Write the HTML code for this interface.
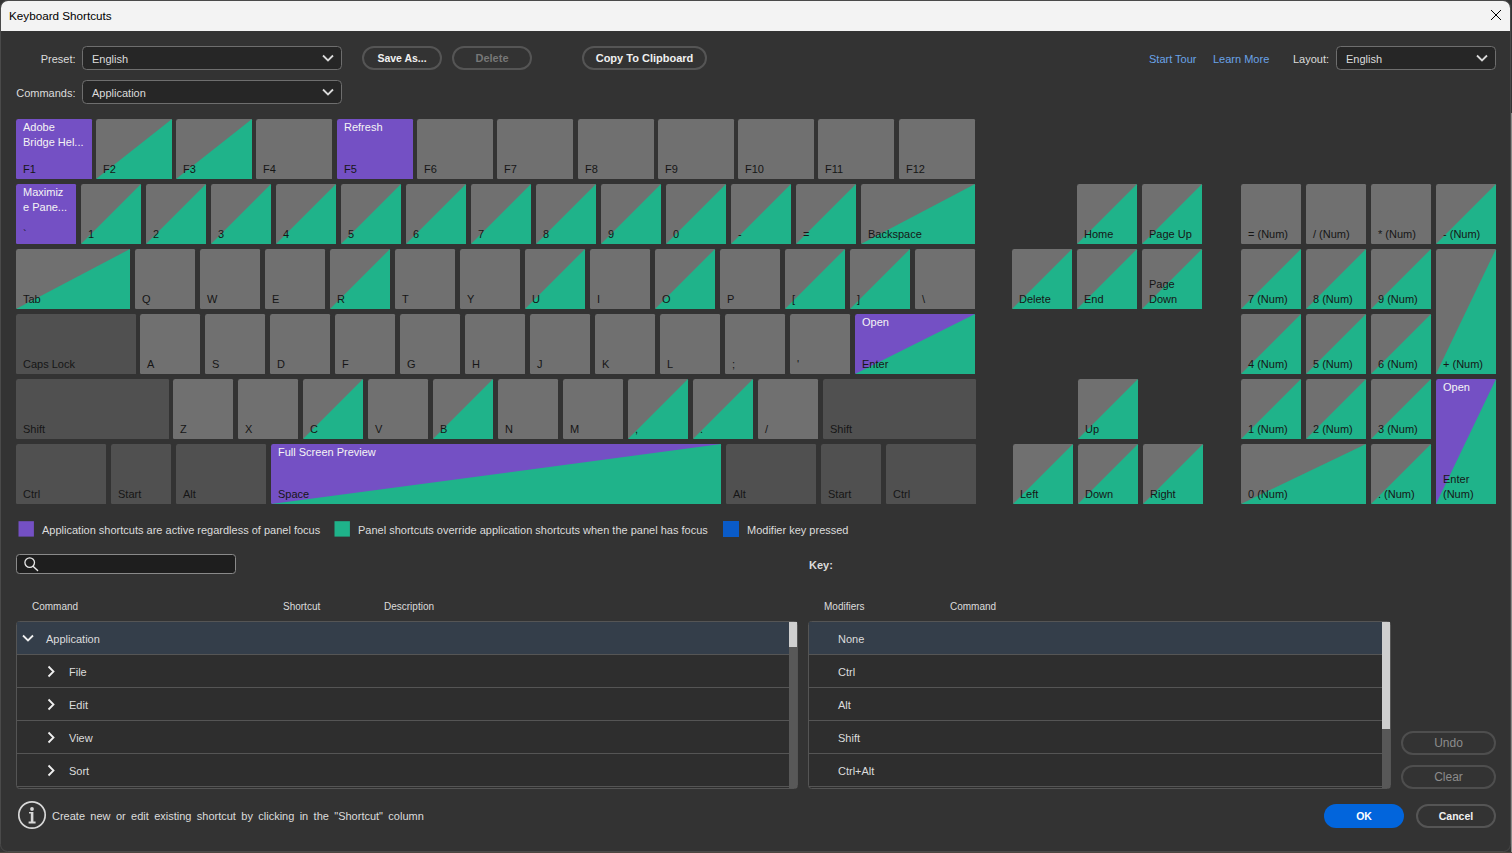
<!DOCTYPE html>
<html><head><meta charset="utf-8"><title>Keyboard Shortcuts</title>
<style>html,body{margin:0;padding:0;width:1512px;height:853px;overflow:hidden;background:#343434;}
text{white-space:pre;}</style></head><body>
<svg width="1512" height="853" viewBox="0 0 1512 853" font-family='"Liberation Sans", sans-serif' style="position:absolute;left:0;top:0">
<rect x="0" y="0" width="1512" height="853" fill="#343434"/>
<rect x="0" y="852" width="1512" height="1" fill="#4d4640"/>
<rect x="1511" y="113" width="1" height="739" fill="#8a8a88"/>
<rect x="0.5" y="0.5" width="1510" height="851" rx="7" fill="#333333" stroke="#4a4a4a" stroke-width="1"/>
<path d="M1,31 V8 a7,7 0 0 1 7,-7 H1503 a7,7 0 0 1 7,7 V31 Z" fill="#f3f3f3"/>
<text x="9" y="20" font-size="11.7" fill="#000">Keyboard Shortcuts</text>
<path d="M1491,10 L1501,20 M1501,10 L1491,20" stroke="#000" stroke-width="1"/>
<text x="75.5" y="63" font-size="11" fill="#dcdcdc" text-anchor="end">Preset:</text>
<rect x="82.5" y="46.5" width="259" height="23" rx="4" fill="#262626" stroke="#6e6e6e" stroke-width="1"/>
<text x="92" y="63" font-size="11" fill="#dcdcdc">English</text>
<path d="M323,55.5 L328,60.5 L333,55.5" fill="none" stroke="#dadada" stroke-width="1.8"/>
<text x="75.5" y="97" font-size="11" fill="#dcdcdc" text-anchor="end">Commands:</text>
<rect x="82.5" y="80.5" width="259" height="23" rx="4" fill="#262626" stroke="#6e6e6e" stroke-width="1"/>
<text x="92" y="97" font-size="11" fill="#dcdcdc">Application</text>
<path d="M323,89.5 L328,94.5 L333,89.5" fill="none" stroke="#dadada" stroke-width="1.8"/>
<rect x="363" y="47" width="78" height="22" rx="11.0" fill="none" stroke="#555" stroke-width="2"/>
<text x="402.0" y="62.0" font-size="10.5" fill="#f0f0f0" font-weight="bold" text-anchor="middle">Save As...</text>
<rect x="453" y="47" width="78" height="22" rx="11.0" fill="none" stroke="#555" stroke-width="2"/>
<text x="492.0" y="62.0" font-size="11" fill="#777" font-weight="bold" text-anchor="middle">Delete</text>
<rect x="583" y="47" width="123" height="22" rx="11.0" fill="none" stroke="#555" stroke-width="2"/>
<text x="644.5" y="62.0" font-size="11" fill="#f0f0f0" font-weight="bold" text-anchor="middle">Copy To Clipboard</text>
<text x="1149" y="63" font-size="11" fill="#6aa3e8">Start Tour</text>
<text x="1213" y="63" font-size="11" fill="#6aa3e8">Learn More</text>
<text x="1293" y="63" font-size="11" fill="#dcdcdc">Layout:</text>
<rect x="1336.5" y="46.5" width="159" height="23" rx="4" fill="#262626" stroke="#6e6e6e" stroke-width="1"/>
<text x="1346" y="63" font-size="11" fill="#dcdcdc">English</text>
<path d="M1477,55.5 L1482,60.5 L1487,55.5" fill="none" stroke="#dadada" stroke-width="1.8"/>
<path d="M16,121.4 Q16,119 18.4,119 H90.8 Q92,119 92,120.2 V179 H17.2 Q16,179 16,177.8 Z" fill="#7450c4"/>
<text x="23" y="131" font-size="11" fill="#f4f4f4">Adobe</text>
<text x="23" y="146" font-size="11" fill="#f4f4f4">Bridge Hel...</text>
<text x="23" y="173" font-size="11" fill="#161616">F1</text>
<path d="M96,121.4 Q96,119 98.4,119 H170.8 Q172,119 172,120.2 V179 H97.2 Q96,179 96,177.8 Z" fill="#707070"/>
<polygon points="96,179 172,119 172,179" fill="#1fb38a"/>
<text x="103" y="173" font-size="11" fill="#161616">F2</text>
<path d="M176,121.4 Q176,119 178.4,119 H250.8 Q252,119 252,120.2 V179 H177.2 Q176,179 176,177.8 Z" fill="#707070"/>
<polygon points="176,179 252,119 252,179" fill="#1fb38a"/>
<text x="183" y="173" font-size="11" fill="#161616">F3</text>
<path d="M256,121.4 Q256,119 258.4,119 H330.8 Q332,119 332,120.2 V179 H257.2 Q256,179 256,177.8 Z" fill="#707070"/>
<text x="263" y="173" font-size="11" fill="#161616">F4</text>
<path d="M337,121.4 Q337,119 339.4,119 H411.8 Q413,119 413,120.2 V179 H338.2 Q337,179 337,177.8 Z" fill="#7450c4"/>
<text x="344" y="131" font-size="11" fill="#f4f4f4">Refresh</text>
<text x="344" y="173" font-size="11" fill="#161616">F5</text>
<path d="M417,121.4 Q417,119 419.4,119 H491.8 Q493,119 493,120.2 V179 H418.2 Q417,179 417,177.8 Z" fill="#707070"/>
<text x="424" y="173" font-size="11" fill="#161616">F6</text>
<path d="M497,121.4 Q497,119 499.4,119 H571.8 Q573,119 573,120.2 V179 H498.2 Q497,179 497,177.8 Z" fill="#707070"/>
<text x="504" y="173" font-size="11" fill="#161616">F7</text>
<path d="M578,121.4 Q578,119 580.4,119 H652.8 Q654,119 654,120.2 V179 H579.2 Q578,179 578,177.8 Z" fill="#707070"/>
<text x="585" y="173" font-size="11" fill="#161616">F8</text>
<path d="M658,121.4 Q658,119 660.4,119 H732.8 Q734,119 734,120.2 V179 H659.2 Q658,179 658,177.8 Z" fill="#707070"/>
<text x="665" y="173" font-size="11" fill="#161616">F9</text>
<path d="M738,121.4 Q738,119 740.4,119 H812.8 Q814,119 814,120.2 V179 H739.2 Q738,179 738,177.8 Z" fill="#707070"/>
<text x="745" y="173" font-size="11" fill="#161616">F10</text>
<path d="M818,121.4 Q818,119 820.4,119 H892.8 Q894,119 894,120.2 V179 H819.2 Q818,179 818,177.8 Z" fill="#707070"/>
<text x="825" y="173" font-size="11" fill="#161616">F11</text>
<path d="M899,121.4 Q899,119 901.4,119 H973.8 Q975,119 975,120.2 V179 H900.2 Q899,179 899,177.8 Z" fill="#707070"/>
<text x="906" y="173" font-size="11" fill="#161616">F12</text>
<path d="M16,186.4 Q16,184 18.4,184 H74.8 Q76,184 76,185.2 V244 H17.2 Q16,244 16,242.8 Z" fill="#7450c4"/>
<text x="23" y="196" font-size="11" fill="#f4f4f4">Maximiz</text>
<text x="23" y="211" font-size="11" fill="#f4f4f4">e Pane...</text>
<text x="23" y="238" font-size="11" fill="#161616">`</text>
<path d="M81,186.4 Q81,184 83.4,184 H139.8 Q141,184 141,185.2 V244 H82.2 Q81,244 81,242.8 Z" fill="#707070"/>
<polygon points="81,244 141,184 141,244" fill="#1fb38a"/>
<text x="88" y="238" font-size="11" fill="#161616">1</text>
<path d="M146,186.4 Q146,184 148.4,184 H204.8 Q206,184 206,185.2 V244 H147.2 Q146,244 146,242.8 Z" fill="#707070"/>
<polygon points="146,244 206,184 206,244" fill="#1fb38a"/>
<text x="153" y="238" font-size="11" fill="#161616">2</text>
<path d="M211,186.4 Q211,184 213.4,184 H269.8 Q271,184 271,185.2 V244 H212.2 Q211,244 211,242.8 Z" fill="#707070"/>
<polygon points="211,244 271,184 271,244" fill="#1fb38a"/>
<text x="218" y="238" font-size="11" fill="#161616">3</text>
<path d="M276,186.4 Q276,184 278.4,184 H334.8 Q336,184 336,185.2 V244 H277.2 Q276,244 276,242.8 Z" fill="#707070"/>
<polygon points="276,244 336,184 336,244" fill="#1fb38a"/>
<text x="283" y="238" font-size="11" fill="#161616">4</text>
<path d="M341,186.4 Q341,184 343.4,184 H399.8 Q401,184 401,185.2 V244 H342.2 Q341,244 341,242.8 Z" fill="#707070"/>
<polygon points="341,244 401,184 401,244" fill="#1fb38a"/>
<text x="348" y="238" font-size="11" fill="#161616">5</text>
<path d="M406,186.4 Q406,184 408.4,184 H464.8 Q466,184 466,185.2 V244 H407.2 Q406,244 406,242.8 Z" fill="#707070"/>
<polygon points="406,244 466,184 466,244" fill="#1fb38a"/>
<text x="413" y="238" font-size="11" fill="#161616">6</text>
<path d="M471,186.4 Q471,184 473.4,184 H529.8 Q531,184 531,185.2 V244 H472.2 Q471,244 471,242.8 Z" fill="#707070"/>
<polygon points="471,244 531,184 531,244" fill="#1fb38a"/>
<text x="478" y="238" font-size="11" fill="#161616">7</text>
<path d="M536,186.4 Q536,184 538.4,184 H594.8 Q596,184 596,185.2 V244 H537.2 Q536,244 536,242.8 Z" fill="#707070"/>
<polygon points="536,244 596,184 596,244" fill="#1fb38a"/>
<text x="543" y="238" font-size="11" fill="#161616">8</text>
<path d="M601,186.4 Q601,184 603.4,184 H659.8 Q661,184 661,185.2 V244 H602.2 Q601,244 601,242.8 Z" fill="#707070"/>
<polygon points="601,244 661,184 661,244" fill="#1fb38a"/>
<text x="608" y="238" font-size="11" fill="#161616">9</text>
<path d="M666,186.4 Q666,184 668.4,184 H724.8 Q726,184 726,185.2 V244 H667.2 Q666,244 666,242.8 Z" fill="#707070"/>
<polygon points="666,244 726,184 726,244" fill="#1fb38a"/>
<text x="673" y="238" font-size="11" fill="#161616">0</text>
<path d="M731,186.4 Q731,184 733.4,184 H789.8 Q791,184 791,185.2 V244 H732.2 Q731,244 731,242.8 Z" fill="#707070"/>
<polygon points="731,244 791,184 791,244" fill="#1fb38a"/>
<text x="738" y="238" font-size="11" fill="#161616">-</text>
<path d="M796,186.4 Q796,184 798.4,184 H854.8 Q856,184 856,185.2 V244 H797.2 Q796,244 796,242.8 Z" fill="#707070"/>
<polygon points="796,244 856,184 856,244" fill="#1fb38a"/>
<text x="803" y="238" font-size="11" fill="#161616">=</text>
<path d="M861,186.4 Q861,184 863.4,184 H973.8 Q975,184 975,185.2 V244 H862.2 Q861,244 861,242.8 Z" fill="#707070"/>
<polygon points="861,244 975,184 975,244" fill="#1fb38a"/>
<text x="868" y="238" font-size="11" fill="#161616">Backspace</text>
<path d="M16,251.4 Q16,249 18.4,249 H128.8 Q130,249 130,250.2 V309 H17.2 Q16,309 16,307.8 Z" fill="#707070"/>
<polygon points="16,309 130,249 130,309" fill="#1fb38a"/>
<text x="23" y="303" font-size="11" fill="#161616">Tab</text>
<path d="M135,251.4 Q135,249 137.4,249 H193.8 Q195,249 195,250.2 V309 H136.2 Q135,309 135,307.8 Z" fill="#707070"/>
<text x="142" y="303" font-size="11" fill="#161616">Q</text>
<path d="M200,251.4 Q200,249 202.4,249 H258.8 Q260,249 260,250.2 V309 H201.2 Q200,309 200,307.8 Z" fill="#707070"/>
<text x="207" y="303" font-size="11" fill="#161616">W</text>
<path d="M265,251.4 Q265,249 267.4,249 H323.8 Q325,249 325,250.2 V309 H266.2 Q265,309 265,307.8 Z" fill="#707070"/>
<text x="272" y="303" font-size="11" fill="#161616">E</text>
<path d="M330,251.4 Q330,249 332.4,249 H388.8 Q390,249 390,250.2 V309 H331.2 Q330,309 330,307.8 Z" fill="#707070"/>
<polygon points="330,309 390,249 390,309" fill="#1fb38a"/>
<text x="337" y="303" font-size="11" fill="#161616">R</text>
<path d="M395,251.4 Q395,249 397.4,249 H453.8 Q455,249 455,250.2 V309 H396.2 Q395,309 395,307.8 Z" fill="#707070"/>
<text x="402" y="303" font-size="11" fill="#161616">T</text>
<path d="M460,251.4 Q460,249 462.4,249 H518.8 Q520,249 520,250.2 V309 H461.2 Q460,309 460,307.8 Z" fill="#707070"/>
<text x="467" y="303" font-size="11" fill="#161616">Y</text>
<path d="M525,251.4 Q525,249 527.4,249 H583.8 Q585,249 585,250.2 V309 H526.2 Q525,309 525,307.8 Z" fill="#707070"/>
<polygon points="525,309 585,249 585,309" fill="#1fb38a"/>
<text x="532" y="303" font-size="11" fill="#161616">U</text>
<path d="M590,251.4 Q590,249 592.4,249 H648.8 Q650,249 650,250.2 V309 H591.2 Q590,309 590,307.8 Z" fill="#707070"/>
<text x="597" y="303" font-size="11" fill="#161616">I</text>
<path d="M655,251.4 Q655,249 657.4,249 H713.8 Q715,249 715,250.2 V309 H656.2 Q655,309 655,307.8 Z" fill="#707070"/>
<polygon points="655,309 715,249 715,309" fill="#1fb38a"/>
<text x="662" y="303" font-size="11" fill="#161616">O</text>
<path d="M720,251.4 Q720,249 722.4,249 H778.8 Q780,249 780,250.2 V309 H721.2 Q720,309 720,307.8 Z" fill="#707070"/>
<text x="727" y="303" font-size="11" fill="#161616">P</text>
<path d="M785,251.4 Q785,249 787.4,249 H843.8 Q845,249 845,250.2 V309 H786.2 Q785,309 785,307.8 Z" fill="#707070"/>
<polygon points="785,309 845,249 845,309" fill="#1fb38a"/>
<text x="792" y="303" font-size="11" fill="#161616">[</text>
<path d="M850,251.4 Q850,249 852.4,249 H908.8 Q910,249 910,250.2 V309 H851.2 Q850,309 850,307.8 Z" fill="#707070"/>
<polygon points="850,309 910,249 910,309" fill="#1fb38a"/>
<text x="857" y="303" font-size="11" fill="#161616">]</text>
<path d="M915,251.4 Q915,249 917.4,249 H973.8 Q975,249 975,250.2 V309 H916.2 Q915,309 915,307.8 Z" fill="#707070"/>
<text x="922" y="303" font-size="11" fill="#161616">\</text>
<path d="M16,316.4 Q16,314 18.4,314 H134.8 Q136,314 136,315.2 V374 H17.2 Q16,374 16,372.8 Z" fill="#505050"/>
<text x="23" y="368" font-size="11" fill="#161616">Caps Lock</text>
<path d="M140,316.4 Q140,314 142.4,314 H198.8 Q200,314 200,315.2 V374 H141.2 Q140,374 140,372.8 Z" fill="#707070"/>
<text x="147" y="368" font-size="11" fill="#161616">A</text>
<path d="M205,316.4 Q205,314 207.4,314 H263.8 Q265,314 265,315.2 V374 H206.2 Q205,374 205,372.8 Z" fill="#707070"/>
<text x="212" y="368" font-size="11" fill="#161616">S</text>
<path d="M270,316.4 Q270,314 272.4,314 H328.8 Q330,314 330,315.2 V374 H271.2 Q270,374 270,372.8 Z" fill="#707070"/>
<text x="277" y="368" font-size="11" fill="#161616">D</text>
<path d="M335,316.4 Q335,314 337.4,314 H393.8 Q395,314 395,315.2 V374 H336.2 Q335,374 335,372.8 Z" fill="#707070"/>
<text x="342" y="368" font-size="11" fill="#161616">F</text>
<path d="M400,316.4 Q400,314 402.4,314 H458.8 Q460,314 460,315.2 V374 H401.2 Q400,374 400,372.8 Z" fill="#707070"/>
<text x="407" y="368" font-size="11" fill="#161616">G</text>
<path d="M465,316.4 Q465,314 467.4,314 H523.8 Q525,314 525,315.2 V374 H466.2 Q465,374 465,372.8 Z" fill="#707070"/>
<text x="472" y="368" font-size="11" fill="#161616">H</text>
<path d="M530,316.4 Q530,314 532.4,314 H588.8 Q590,314 590,315.2 V374 H531.2 Q530,374 530,372.8 Z" fill="#707070"/>
<text x="537" y="368" font-size="11" fill="#161616">J</text>
<path d="M595,316.4 Q595,314 597.4,314 H653.8 Q655,314 655,315.2 V374 H596.2 Q595,374 595,372.8 Z" fill="#707070"/>
<text x="602" y="368" font-size="11" fill="#161616">K</text>
<path d="M660,316.4 Q660,314 662.4,314 H718.8 Q720,314 720,315.2 V374 H661.2 Q660,374 660,372.8 Z" fill="#707070"/>
<text x="667" y="368" font-size="11" fill="#161616">L</text>
<path d="M725,316.4 Q725,314 727.4,314 H783.8 Q785,314 785,315.2 V374 H726.2 Q725,374 725,372.8 Z" fill="#707070"/>
<text x="732" y="368" font-size="11" fill="#161616">;</text>
<path d="M790,316.4 Q790,314 792.4,314 H848.8 Q850,314 850,315.2 V374 H791.2 Q790,374 790,372.8 Z" fill="#707070"/>
<text x="797" y="368" font-size="11" fill="#161616">'</text>
<path d="M855,316.4 Q855,314 857.4,314 H973.8 Q975,314 975,315.2 V374 H856.2 Q855,374 855,372.8 Z" fill="#7450c4"/>
<polygon points="855,374 975,314 975,374" fill="#1fb38a"/>
<text x="862" y="326" font-size="11" fill="#f4f4f4">Open</text>
<text x="862" y="368" font-size="11" fill="#161616">Enter</text>
<path d="M16,381.4 Q16,379 18.4,379 H167.8 Q169,379 169,380.2 V439 H17.2 Q16,439 16,437.8 Z" fill="#505050"/>
<text x="23" y="433" font-size="11" fill="#161616">Shift</text>
<path d="M173,381.4 Q173,379 175.4,379 H231.8 Q233,379 233,380.2 V439 H174.2 Q173,439 173,437.8 Z" fill="#707070"/>
<text x="180" y="433" font-size="11" fill="#161616">Z</text>
<path d="M238,381.4 Q238,379 240.4,379 H296.8 Q298,379 298,380.2 V439 H239.2 Q238,439 238,437.8 Z" fill="#707070"/>
<text x="245" y="433" font-size="11" fill="#161616">X</text>
<path d="M303,381.4 Q303,379 305.4,379 H361.8 Q363,379 363,380.2 V439 H304.2 Q303,439 303,437.8 Z" fill="#707070"/>
<polygon points="303,439 363,379 363,439" fill="#1fb38a"/>
<text x="310" y="433" font-size="11" fill="#161616">C</text>
<path d="M368,381.4 Q368,379 370.4,379 H426.8 Q428,379 428,380.2 V439 H369.2 Q368,439 368,437.8 Z" fill="#707070"/>
<text x="375" y="433" font-size="11" fill="#161616">V</text>
<path d="M433,381.4 Q433,379 435.4,379 H491.8 Q493,379 493,380.2 V439 H434.2 Q433,439 433,437.8 Z" fill="#707070"/>
<polygon points="433,439 493,379 493,439" fill="#1fb38a"/>
<text x="440" y="433" font-size="11" fill="#161616">B</text>
<path d="M498,381.4 Q498,379 500.4,379 H556.8 Q558,379 558,380.2 V439 H499.2 Q498,439 498,437.8 Z" fill="#707070"/>
<text x="505" y="433" font-size="11" fill="#161616">N</text>
<path d="M563,381.4 Q563,379 565.4,379 H621.8 Q623,379 623,380.2 V439 H564.2 Q563,439 563,437.8 Z" fill="#707070"/>
<text x="570" y="433" font-size="11" fill="#161616">M</text>
<path d="M628,381.4 Q628,379 630.4,379 H686.8 Q688,379 688,380.2 V439 H629.2 Q628,439 628,437.8 Z" fill="#707070"/>
<polygon points="628,439 688,379 688,439" fill="#1fb38a"/>
<text x="635" y="433" font-size="11" fill="#161616">,</text>
<path d="M693,381.4 Q693,379 695.4,379 H751.8 Q753,379 753,380.2 V439 H694.2 Q693,439 693,437.8 Z" fill="#707070"/>
<polygon points="693,439 753,379 753,439" fill="#1fb38a"/>
<text x="700" y="433" font-size="11" fill="#161616">.</text>
<path d="M758,381.4 Q758,379 760.4,379 H816.8 Q818,379 818,380.2 V439 H759.2 Q758,439 758,437.8 Z" fill="#707070"/>
<text x="765" y="433" font-size="11" fill="#161616">/</text>
<path d="M823,381.4 Q823,379 825.4,379 H974.8 Q976,379 976,380.2 V439 H824.2 Q823,439 823,437.8 Z" fill="#505050"/>
<text x="830" y="433" font-size="11" fill="#161616">Shift</text>
<path d="M16,446.4 Q16,444 18.4,444 H104.8 Q106,444 106,445.2 V504 H17.2 Q16,504 16,502.8 Z" fill="#505050"/>
<text x="23" y="498" font-size="11" fill="#161616">Ctrl</text>
<path d="M111,446.4 Q111,444 113.4,444 H169.8 Q171,444 171,445.2 V504 H112.2 Q111,504 111,502.8 Z" fill="#505050"/>
<text x="118" y="498" font-size="11" fill="#161616">Start</text>
<path d="M176,446.4 Q176,444 178.4,444 H264.8 Q266,444 266,445.2 V504 H177.2 Q176,504 176,502.8 Z" fill="#505050"/>
<text x="183" y="498" font-size="11" fill="#161616">Alt</text>
<path d="M271,446.4 Q271,444 273.4,444 H719.8 Q721,444 721,445.2 V504 H272.2 Q271,504 271,502.8 Z" fill="#7450c4"/>
<polygon points="271,504 721,444 721,504" fill="#1fb38a"/>
<text x="278" y="456" font-size="11" fill="#f4f4f4">Full Screen Preview</text>
<text x="278" y="498" font-size="11" fill="#161616">Space</text>
<path d="M726,446.4 Q726,444 728.4,444 H814.8 Q816,444 816,445.2 V504 H727.2 Q726,504 726,502.8 Z" fill="#505050"/>
<text x="733" y="498" font-size="11" fill="#161616">Alt</text>
<path d="M821,446.4 Q821,444 823.4,444 H879.8 Q881,444 881,445.2 V504 H822.2 Q821,504 821,502.8 Z" fill="#505050"/>
<text x="828" y="498" font-size="11" fill="#161616">Start</text>
<path d="M886,446.4 Q886,444 888.4,444 H974.8 Q976,444 976,445.2 V504 H887.2 Q886,504 886,502.8 Z" fill="#505050"/>
<text x="893" y="498" font-size="11" fill="#161616">Ctrl</text>
<path d="M1077,186.4 Q1077,184 1079.4,184 H1135.8 Q1137,184 1137,185.2 V244 H1078.2 Q1077,244 1077,242.8 Z" fill="#707070"/>
<polygon points="1077,244 1137,184 1137,244" fill="#1fb38a"/>
<text x="1084" y="238" font-size="11" fill="#161616">Home</text>
<path d="M1142,186.4 Q1142,184 1144.4,184 H1200.8 Q1202,184 1202,185.2 V244 H1143.2 Q1142,244 1142,242.8 Z" fill="#707070"/>
<polygon points="1142,244 1202,184 1202,244" fill="#1fb38a"/>
<text x="1149" y="238" font-size="11" fill="#161616">Page Up</text>
<path d="M1012,251.4 Q1012,249 1014.4,249 H1070.8 Q1072,249 1072,250.2 V309 H1013.2 Q1012,309 1012,307.8 Z" fill="#707070"/>
<polygon points="1012,309 1072,249 1072,309" fill="#1fb38a"/>
<text x="1019" y="303" font-size="11" fill="#161616">Delete</text>
<path d="M1077,251.4 Q1077,249 1079.4,249 H1135.8 Q1137,249 1137,250.2 V309 H1078.2 Q1077,309 1077,307.8 Z" fill="#707070"/>
<polygon points="1077,309 1137,249 1137,309" fill="#1fb38a"/>
<text x="1084" y="303" font-size="11" fill="#161616">End</text>
<path d="M1142,251.4 Q1142,249 1144.4,249 H1200.8 Q1202,249 1202,250.2 V309 H1143.2 Q1142,309 1142,307.8 Z" fill="#707070"/>
<polygon points="1142,309 1202,249 1202,309" fill="#1fb38a"/>
<text x="1149" y="288" font-size="11" fill="#161616">Page</text>
<text x="1149" y="303" font-size="11" fill="#161616">Down</text>
<path d="M1078,381.4 Q1078,379 1080.4,379 H1136.8 Q1138,379 1138,380.2 V439 H1079.2 Q1078,439 1078,437.8 Z" fill="#707070"/>
<polygon points="1078,439 1138,379 1138,439" fill="#1fb38a"/>
<text x="1085" y="433" font-size="11" fill="#161616">Up</text>
<path d="M1013,446.4 Q1013,444 1015.4,444 H1071.8 Q1073,444 1073,445.2 V504 H1014.2 Q1013,504 1013,502.8 Z" fill="#707070"/>
<polygon points="1013,504 1073,444 1073,504" fill="#1fb38a"/>
<text x="1020" y="498" font-size="11" fill="#161616">Left</text>
<path d="M1078,446.4 Q1078,444 1080.4,444 H1136.8 Q1138,444 1138,445.2 V504 H1079.2 Q1078,504 1078,502.8 Z" fill="#707070"/>
<polygon points="1078,504 1138,444 1138,504" fill="#1fb38a"/>
<text x="1085" y="498" font-size="11" fill="#161616">Down</text>
<path d="M1143,446.4 Q1143,444 1145.4,444 H1201.8 Q1203,444 1203,445.2 V504 H1144.2 Q1143,504 1143,502.8 Z" fill="#707070"/>
<polygon points="1143,504 1203,444 1203,504" fill="#1fb38a"/>
<text x="1150" y="498" font-size="11" fill="#161616">Right</text>
<path d="M1241,186.4 Q1241,184 1243.4,184 H1299.8 Q1301,184 1301,185.2 V244 H1242.2 Q1241,244 1241,242.8 Z" fill="#707070"/>
<text x="1248" y="238" font-size="11" fill="#161616">= (Num)</text>
<path d="M1306,186.4 Q1306,184 1308.4,184 H1364.8 Q1366,184 1366,185.2 V244 H1307.2 Q1306,244 1306,242.8 Z" fill="#707070"/>
<text x="1313" y="238" font-size="11" fill="#161616">/ (Num)</text>
<path d="M1371,186.4 Q1371,184 1373.4,184 H1429.8 Q1431,184 1431,185.2 V244 H1372.2 Q1371,244 1371,242.8 Z" fill="#707070"/>
<text x="1378" y="238" font-size="11" fill="#161616">* (Num)</text>
<path d="M1436,186.4 Q1436,184 1438.4,184 H1494.8 Q1496,184 1496,185.2 V244 H1437.2 Q1436,244 1436,242.8 Z" fill="#707070"/>
<polygon points="1436,244 1496,184 1496,244" fill="#1fb38a"/>
<text x="1443" y="238" font-size="11" fill="#161616">- (Num)</text>
<path d="M1241,251.4 Q1241,249 1243.4,249 H1299.8 Q1301,249 1301,250.2 V309 H1242.2 Q1241,309 1241,307.8 Z" fill="#707070"/>
<polygon points="1241,309 1301,249 1301,309" fill="#1fb38a"/>
<text x="1248" y="303" font-size="11" fill="#161616">7 (Num)</text>
<path d="M1306,251.4 Q1306,249 1308.4,249 H1364.8 Q1366,249 1366,250.2 V309 H1307.2 Q1306,309 1306,307.8 Z" fill="#707070"/>
<polygon points="1306,309 1366,249 1366,309" fill="#1fb38a"/>
<text x="1313" y="303" font-size="11" fill="#161616">8 (Num)</text>
<path d="M1371,251.4 Q1371,249 1373.4,249 H1429.8 Q1431,249 1431,250.2 V309 H1372.2 Q1371,309 1371,307.8 Z" fill="#707070"/>
<polygon points="1371,309 1431,249 1431,309" fill="#1fb38a"/>
<text x="1378" y="303" font-size="11" fill="#161616">9 (Num)</text>
<path d="M1436,251.4 Q1436,249 1438.4,249 H1494.8 Q1496,249 1496,250.2 V374 H1437.2 Q1436,374 1436,372.8 Z" fill="#707070"/>
<polygon points="1436,374 1496,249 1496,374" fill="#1fb38a"/>
<text x="1443" y="368" font-size="11" fill="#161616">+ (Num)</text>
<path d="M1241,316.4 Q1241,314 1243.4,314 H1299.8 Q1301,314 1301,315.2 V374 H1242.2 Q1241,374 1241,372.8 Z" fill="#707070"/>
<polygon points="1241,374 1301,314 1301,374" fill="#1fb38a"/>
<text x="1248" y="368" font-size="11" fill="#161616">4 (Num)</text>
<path d="M1306,316.4 Q1306,314 1308.4,314 H1364.8 Q1366,314 1366,315.2 V374 H1307.2 Q1306,374 1306,372.8 Z" fill="#707070"/>
<polygon points="1306,374 1366,314 1366,374" fill="#1fb38a"/>
<text x="1313" y="368" font-size="11" fill="#161616">5 (Num)</text>
<path d="M1371,316.4 Q1371,314 1373.4,314 H1429.8 Q1431,314 1431,315.2 V374 H1372.2 Q1371,374 1371,372.8 Z" fill="#707070"/>
<polygon points="1371,374 1431,314 1431,374" fill="#1fb38a"/>
<text x="1378" y="368" font-size="11" fill="#161616">6 (Num)</text>
<path d="M1241,381.4 Q1241,379 1243.4,379 H1299.8 Q1301,379 1301,380.2 V439 H1242.2 Q1241,439 1241,437.8 Z" fill="#707070"/>
<polygon points="1241,439 1301,379 1301,439" fill="#1fb38a"/>
<text x="1248" y="433" font-size="11" fill="#161616">1 (Num)</text>
<path d="M1306,381.4 Q1306,379 1308.4,379 H1364.8 Q1366,379 1366,380.2 V439 H1307.2 Q1306,439 1306,437.8 Z" fill="#707070"/>
<polygon points="1306,439 1366,379 1366,439" fill="#1fb38a"/>
<text x="1313" y="433" font-size="11" fill="#161616">2 (Num)</text>
<path d="M1371,381.4 Q1371,379 1373.4,379 H1429.8 Q1431,379 1431,380.2 V439 H1372.2 Q1371,439 1371,437.8 Z" fill="#707070"/>
<polygon points="1371,439 1431,379 1431,439" fill="#1fb38a"/>
<text x="1378" y="433" font-size="11" fill="#161616">3 (Num)</text>
<path d="M1436,381.4 Q1436,379 1438.4,379 H1494.8 Q1496,379 1496,380.2 V504 H1437.2 Q1436,504 1436,502.8 Z" fill="#7450c4"/>
<polygon points="1436,504 1496,379 1496,504" fill="#1fb38a"/>
<text x="1443" y="391" font-size="11" fill="#f4f4f4">Open</text>
<text x="1443" y="483" font-size="11" fill="#161616">Enter</text>
<text x="1443" y="498" font-size="11" fill="#161616">(Num)</text>
<path d="M1241,446.4 Q1241,444 1243.4,444 H1364.8 Q1366,444 1366,445.2 V504 H1242.2 Q1241,504 1241,502.8 Z" fill="#707070"/>
<polygon points="1241,504 1366,444 1366,504" fill="#1fb38a"/>
<text x="1248" y="498" font-size="11" fill="#161616">0 (Num)</text>
<path d="M1371,446.4 Q1371,444 1373.4,444 H1429.8 Q1431,444 1431,445.2 V504 H1372.2 Q1371,504 1371,502.8 Z" fill="#707070"/>
<polygon points="1371,504 1431,444 1431,504" fill="#1fb38a"/>
<text x="1378" y="498" font-size="11" fill="#161616">. (Num)</text>
<rect x="18.5" y="521.2" width="15.4" height="15.4" fill="#7450c4"/>
<text x="42" y="534" font-size="11" fill="#dcdcdc">Application shortcuts are active regardless of panel focus</text>
<rect x="334.5" y="521.2" width="15.4" height="15.4" fill="#1fb38a"/>
<text x="358" y="534" font-size="11" fill="#dcdcdc">Panel shortcuts override application shortcuts when the panel has focus</text>
<rect x="723" y="521" width="16" height="16" fill="#0a5bc8"/>
<text x="747" y="534" font-size="11" fill="#dcdcdc">Modifier key pressed</text>
<rect x="16.5" y="554.5" width="219" height="19" rx="3" fill="#1e1e1e" stroke="#8a8a8a" stroke-width="1"/>
<circle cx="29.7" cy="562.6" r="4.8" fill="none" stroke="#e8e8e8" stroke-width="1.3"/><path d="M33.3,566.4 L37.6,570.6" stroke="#e8e8e8" stroke-width="1.4" stroke-linecap="round"/>
<text x="809" y="569" font-size="11" fill="#dcdcdc" font-weight="bold">Key:</text>
<text x="32" y="610" font-size="10" fill="#dcdcdc">Command</text>
<text x="283" y="610" font-size="10" fill="#dcdcdc">Shortcut</text>
<text x="384" y="610" font-size="10" fill="#dcdcdc">Description</text>
<text x="824" y="610" font-size="10" fill="#dcdcdc">Modifiers</text>
<text x="950" y="610" font-size="10" fill="#dcdcdc">Command</text>
<rect x="16.5" y="621.5" width="781" height="167" rx="3" fill="#2e2e2e" stroke="#555" stroke-width="1"/>
<rect x="17" y="622" width="772" height="32" fill="#343e4a"/>
<rect x="17" y="654" width="772" height="1" fill="#555"/>
<rect x="17" y="687" width="772" height="1" fill="#555"/>
<rect x="17" y="720" width="772" height="1" fill="#555"/>
<rect x="17" y="753" width="772" height="1" fill="#555"/>
<rect x="17" y="786" width="772" height="1" fill="#555"/>
<rect x="789" y="622" width="8" height="166" fill="#585858"/>
<rect x="789" y="622" width="8" height="25" fill="#cfcfcf"/>
<path d="M23,635.5 L28,640.5 L33,635.5" fill="none" stroke="#f0f0f0" stroke-width="1.8"/>
<text x="46" y="643" font-size="11" fill="#dcdcdc">Application</text>
<path d="M48.5,666.5 L53.5,671.5 L48.5,676.5" fill="none" stroke="#f0f0f0" stroke-width="1.8"/>
<text x="69" y="676.0" font-size="11" fill="#dcdcdc">File</text>
<path d="M48.5,699.5 L53.5,704.5 L48.5,709.5" fill="none" stroke="#f0f0f0" stroke-width="1.8"/>
<text x="69" y="709.0" font-size="11" fill="#dcdcdc">Edit</text>
<path d="M48.5,732.5 L53.5,737.5 L48.5,742.5" fill="none" stroke="#f0f0f0" stroke-width="1.8"/>
<text x="69" y="742.0" font-size="11" fill="#dcdcdc">View</text>
<path d="M48.5,765.5 L53.5,770.5 L48.5,775.5" fill="none" stroke="#f0f0f0" stroke-width="1.8"/>
<text x="69" y="775.0" font-size="11" fill="#dcdcdc">Sort</text>
<rect x="808.5" y="621.5" width="582" height="167" rx="3" fill="#2e2e2e" stroke="#555" stroke-width="1"/>
<rect x="809" y="622" width="573" height="32" fill="#343e4a"/>
<rect x="809" y="654" width="573" height="1" fill="#555"/>
<rect x="809" y="687" width="573" height="1" fill="#555"/>
<rect x="809" y="720" width="573" height="1" fill="#555"/>
<rect x="809" y="753" width="573" height="1" fill="#555"/>
<rect x="809" y="786" width="573" height="1" fill="#555"/>
<rect x="1382" y="622" width="8" height="166" fill="#585858"/>
<rect x="1382" y="622" width="8" height="107" fill="#cfcfcf"/>
<text x="838" y="643" font-size="11" fill="#dcdcdc">None</text>
<text x="838" y="676" font-size="11" fill="#dcdcdc">Ctrl</text>
<text x="838" y="709" font-size="11" fill="#dcdcdc">Alt</text>
<text x="838" y="742" font-size="11" fill="#dcdcdc">Shift</text>
<text x="838" y="775" font-size="11" fill="#dcdcdc">Ctrl+Alt</text>
<rect x="1402" y="732" width="93" height="22" rx="11.0" fill="none" stroke="#4e4e4e" stroke-width="2"/>
<text x="1448.5" y="747.0" font-size="12" fill="#8c8c8c" font-weight="normal" text-anchor="middle">Undo</text>
<rect x="1402" y="766" width="93" height="22" rx="11.0" fill="none" stroke="#4e4e4e" stroke-width="2"/>
<text x="1448.5" y="781.0" font-size="12" fill="#8c8c8c" font-weight="normal" text-anchor="middle">Clear</text>
<circle cx="32" cy="815" r="13.2" fill="none" stroke="#d8d8d8" stroke-width="1.7"/>
<circle cx="32" cy="809" r="1.9" fill="#d8d8d8"/><path d="M29,812 H33.4 V821.6 H35.6 V823.4 H28.6 V821.6 H30.8 V813.6 H29 Z" fill="#d8d8d8"/>
<text x="52" y="820" font-size="11" fill="#dcdcdc" word-spacing="2.3">Create new or edit existing shortcut by clicking in the &quot;Shortcut&quot; column</text>
<rect x="1324" y="804" width="80" height="24" rx="12" fill="#0265dc"/>
<text x="1364" y="820" font-size="10.5" fill="#fff" font-weight="bold" text-anchor="middle">OK</text>
<rect x="1417" y="805" width="78" height="22" rx="11.0" fill="none" stroke="#555" stroke-width="2"/>
<text x="1456.0" y="820.0" font-size="10.5" fill="#f0f0f0" font-weight="bold" text-anchor="middle">Cancel</text>
</svg>
</body></html>
